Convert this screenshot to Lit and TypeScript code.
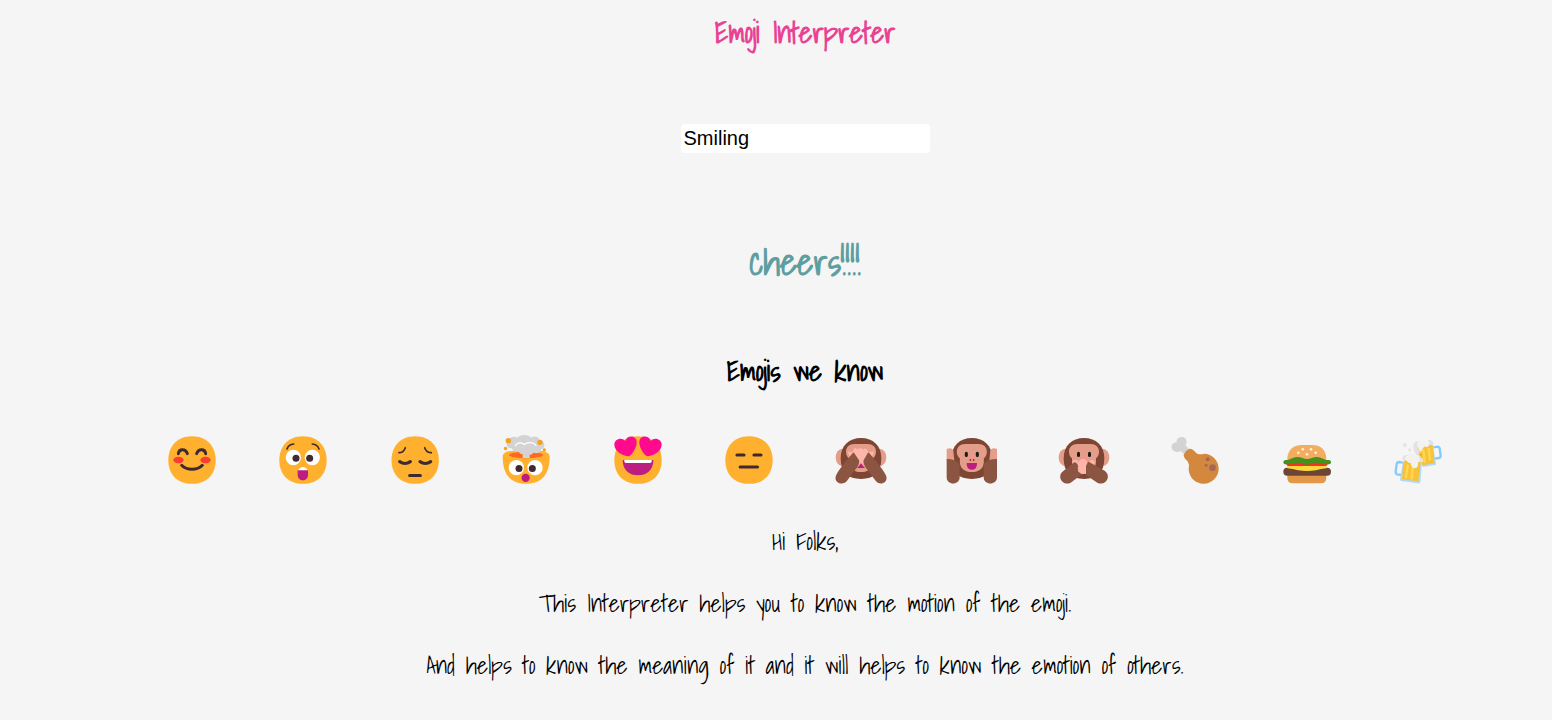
import { LitElement, html, css, svg, TemplateResult } from "lit";
import { customElement, state } from "lit/decorators.js";

interface Emoji {
  name: string;
  meaning: string;
  viewBox: string;
  art: TemplateResult;
}

const face = (cx: number) => svg`
  <path fill="#ffb02e" d="M${cx} 191.500c47.500 0 71-32 71-71s-23.500-72-71-72-71 33-71 72 23.500 71 71 71Z"/>`;

const wideEyes = (lx: number, rx: number, y: number) => svg`
  <circle cx=${lx} cy=${y} r="23" fill="#fff"/>
  <circle cx=${rx} cy=${y} r="23" fill="#fff"/>
  <circle cx=${lx + 8} cy=${y + 2.5} r="10.500" fill="#402a32"/>
  <circle cx=${rx - 8} cy=${y + 2.5} r="10.500" fill="#402a32"/>`;

const monkeyHead = (cx: number) => svg`
  <path fill="#7d4533" d="M${cx} 54c-36 0-61 23-61 61 0 43 22 62 61 62s61-19 61-62c0-38-25-61-61-61Z"/>
  <path fill="#e39d89" d="M${cx - 20} 72h40c15 0 25 9 25 23 0 10-4 16-9 20v10c0 20-15 31-36 31s-36-11-36-31v-10c-5-4-9-10-9-20 0-14 10-23 25-23Z"/>`;

const monkeyEars = (cx: number) => svg`
  <ellipse cx=${cx - 56} cy="112" rx="20" ry="26" fill="#e39d89"/>
  <ellipse cx=${cx + 56} cy="112" rx="20" ry="26" fill="#e39d89"/>`;

const monkeyEyes = (cx: number) => svg`
  <rect x=${cx - 21} y="95" width="9" height="16" rx="4.500" fill="#1c1c1c"/>
  <rect x=${cx + 12} y="95" width="9" height="16" rx="4.500" fill="#1c1c1c"/>`;

const emojis: Emoji[] = [
  {
    name: "😊", meaning: "Smiling", viewBox: "41 36 168 168",
    art: svg`${face(125)}
      <ellipse cx="84.500" cy="120" rx="15.500" ry="10" fill="#ff3a30"/>
      <ellipse cx="165.500" cy="120" rx="15.500" ry="10" fill="#ff3a30"/>
      <g fill="none" stroke="#402a32" stroke-width="9" stroke-linecap="round">
        <path d="M84 101c2-16 22-16 27 0M139 101c5-16 25-16 27 0M94 136c15 16 47 16 62 0"/>
      </g>`,
  },
  {
    name: "😲", meaning: "Astonished", viewBox: "376 36 168 168",
    art: svg`${face(460)}${wideEyes(431, 488, 112.5)}
      <g fill="none" stroke="#402a32" stroke-width="5" stroke-linecap="round">
        <path d="M412 87q5-14 20-15M508 87q-5-14-20-15"/>
      </g>
      <path fill="#bb1d80" d="M444 150h31v15c0 21-31 21-31 0Z"/>
      <path fill="#fff" d="M444 151q16-20 31 0Z"/>`,
  },
  {
    name: "😔", meaning: "Sad", viewBox: "50 36 168 168",
    art: svg`${face(134.500)}
      <g fill="none" stroke="#402a32" stroke-linecap="round">
        <path stroke-width="5" d="M105 83q-5 15-19 15M163 83q5 15 20 15"/>
        <path stroke-width="9.500" d="M88 125q16 11 32 0M149 125q16 11 32 0M118 166.500h32"/>
      </g>`,
  },
  {
    name: "🤯", meaning: "Mind blown", viewBox: "385 36 168 168",
    art: svg`
      <path fill="#ffb02e" d="M399 110c0-10 12-17 28-17h84c17 0 29 7 29 17 0 51-23 81-71 81s-70-30-70-81Z"/>
      <ellipse cx="469" cy="105" rx="51" ry="10" fill="#ff6723"/>
      <path fill="#d3d3d3" d="M459 114V103c-6-1-10-3-12-8-13 2-20-4-20-10-19 2-21-22-7-25 0-10 15-12 23-7 8-11 34-11 41 0 10-7 25-3 26 8 16 1 20 24 4 27 1 9-11 14-23 10-2 4-6 6-11 6v10Z"/>
      <path fill="none" stroke="#fff" stroke-width="3.500" stroke-linecap="round" d="M437 77c4-10 20-11 27-3 7-8 29-9 35 3"/>
      <circle cx="416" cy="62" r="8" fill="#f4a020"/><circle cx="511" cy="67" r="8" fill="#f4a020"/>
      <circle cx="407.500" cy="85.500" r="5" fill="#f4a020"/><circle cx="524" cy="90" r="5" fill="#f4a020"/>
      ${wideEyes(440, 496, 143)}
      <circle cx="468" cy="173.500" r="12.500" fill="#bb1d80"/>`,
  },
  {
    name: "😍", meaning: "Love", viewBox: "44 36 168 168",
    art: svg`${face(128)}
      <path fill="#bb1d80" d="M82 120h92c0 27-16 46-46 46s-46-19-46-46Z"/>
      <path fill="#fff" d="M87 120h82q1 9-5 9H92q-6 0-5-9Z"/>
      <path fill="#ff0a8f" d="M101 109C82 107 58 95 57 74c0-16 21-24 33-11 5-18 32-18 34 2 1 17-11 35-23 44Z"/>
      <path fill="#ff0a8f" d="M155 109c19-2 43-14 44-35 0-16-21-24-33-11-5-18-32-18-34 2-1 17 11 35 23 44Z"/>`,
  },
  {
    name: "😑", meaning: "Expressionless", viewBox: "379 36 168 168",
    art: svg`${face(463)}
      <path fill="none" stroke="#402a32" stroke-width="9.500" stroke-linecap="round" d="M427 105h21M478 105h21M436.500 141h52"/>`,
  },
  {
    name: "🙈", meaning: "See no evil", viewBox: "38 36 168 168",
    art: svg`${monkeyEars(122)}${monkeyHead(122)}
      <path fill="#ffb6aa" d="M82 96c5-4 10 2 14 1l5-11c3-4 8-2 10 3 3-6 14-6 18 0 3-5 9-5 11 0l5 8c5 1 10-5 16-1l-5 13-25 19-4 6h-10l-4-6-25-19Z"/>
      <path fill="#bb1d80" d="M122 129q4 8 12 15h-24q8-7 12-15Z"/>
      <path fill="#8b5542" d="M98 98q3-1 5 3l13 20q2 5-1 11l-4 9-32 43c-15 16-42 1-31-20 10-19 34-47 50-66ZM146 98q-3-1-5 3l-11 20q-2 5 1 11l4 9 32 43c15 16 40 1 29-20-10-19-34-47-50-66Z"/>`,
  },
  {
    name: "🙉", meaning: "Hear no evil", viewBox: "373 36 168 168",
    art: svg`${monkeyHead(456.500)}${monkeyEyes(456.500)}
      <path fill="#ff8e8a" d="M446 115q10-4 21 0v8q-10 5-21 0Z"/>
      <circle cx="452" cy="120" r="2.500" fill="#321b22"/><circle cx="462" cy="120" r="2.500" fill="#321b22"/>
      <path fill="#bb1d80" d="M441 129h31c0 13-5 20-15.500 20S441 142 441 129Z"/>
      <path fill="#e39d89" d="M381 122V87q15-6 20 5l3 30ZM532 122V87q-15-6-20 5l-3 30Z"/>
      <path fill="#8b5542" d="M381 117q28 0 39 15v40c0 25-39 25-39 0ZM532 117q-29 0-40 15v40c0 25 40 25 40 0Z"/>`,
  },
  {
    name: "🙊", meaning: "Speak no evil", viewBox: "47 36 168 168",
    art: svg`${monkeyEars(131)}${monkeyHead(131)}${monkeyEyes(131)}
      <path fill="#ff8e8a" d="M117 123q3-10 14-10t14 10Z"/>
      <circle cx="105" cy="127" r="8" fill="#ffb6aa"/><circle cx="155" cy="128" r="8" fill="#ffb6aa"/>
      <path fill="#ffb6aa" d="M112 132c2-10 10-17 18-15 7 0 9 6 12 13v31l-28 2Z"/>
      <path fill="#8b5542" d="M102 127c6-2 10 6 12 14l-3 3 3 5-3 4 14 10-34 25c-23 12-44-19-22-35ZM145 125c-5 3-5 8-8 13v27l35 24c24 9 43-20 21-37Z"/>`,
  },
  {
    name: "🍗", meaning: "Poultry leg", viewBox: "382 36 168 168",
    art: svg`
      <path fill="#d3d3d3" d="M411 68c-3-20 28-24 30-4 0 5-2 9-4 12l11 11-15 15-10-9c-13 9-30-3-27-16 2-7 9-10 15-9Z"/>
      <path fill="#d3883e" d="M432 105q5-14 18-19c9-1 14 8 23 15q9 3 20 0c25 0 44 21 44 45s-20 45-45 45-45-20-45-45q3-13-3-22c-8-7-12-13-12-19Z"/>
      <circle cx="504" cy="118" r="6" fill="#a56953"/><circle cx="499.500" cy="136" r="4.500" fill="#a56953"/><circle cx="518.500" cy="143" r="10" fill="#a56953"/>`,
  },
  {
    name: "🍔", meaning: "Burger", viewBox: "56 36 168 168",
    art: svg`
      <path fill="#e39847" d="M81 155h117v18q0 17-17 17H98q-17 0-17-17Z"/>
      <rect x="69" y="143" width="143" height="24" rx="12" fill="#6d4534"/>
      <path fill="#ffd83b" d="M81 138h117v7q-18 2-31 6-27 4-54 0-15-4-32-6Z"/>
      <rect x="78" y="123" width="124" height="15" rx="6" fill="#f92f28"/>
      <path fill="#f3ad61" d="M81 120v-7q5-38 45-38h28q40 0 44 38v7Z"/>
      <path fill="#44911b" d="M76 120c14 1 19-9 35-9 12 0 19 6 29 6 11 0 18-6 29-6 16 0 20 10 36 9 10 1 9 13 0 13-19 1-29-5-38-5-10 0-17 6-27 6s-17-6-27-6c-11 0-18 6-37 5-9 0-9-13 0-13Z"/>
      <g fill="#fff0d3"><circle cx="127.500" cy="88" r="4"/><circle cx="152" cy="88" r="4"/><circle cx="114" cy="98.500" r="4"/><circle cx="166" cy="98.500" r="4"/><circle cx="140" cy="103" r="4"/></g>`,
  },
  {
    name: "🍻", meaning: "cheers!!!!", viewBox: "391 36 168 168",
    art: svg`
      <path fill="none" stroke="#83cbff" stroke-width="7" d="M521 82l14-2q4 0 5 5l3 22q0 6-5 7l-13 2"/>
      <path fill="#aed9fb" d="M465 82l55-9 9 61-39 7-18-28Z"/>
      <path fill="#f9c23c" d="M465 85l54-12 6 57-37 6-6-24q-13-10-17-27Z"/>
      <path fill="none" stroke="#ffd84b" stroke-width="7" stroke-linecap="round" d="M491 91l4 34M507 84l4 35"/>
      <path fill="#f2f2f3" d="M474 68q10-11 26-4l8 14q-7 5-12 1-8 4-12 17-10-6-10-28Z"/>
      <path fill="#e2e2e4" d="M463 90c-6-14 0-26 12-27-4 10-2 22 5 34l-4 8q-11-1-13-15ZM503 60c9-3 18 1 19 13l-2 3-11-2q0-8-6-14Z"/>
      <path fill="none" stroke="#83cbff" stroke-width="7" d="M430 128l-12-2q-6 0-7 6l-3 23q0 7 5 8l14 2"/>
      <path fill="#aed9fb" d="M431 118l56 6-5 62q-1 5-6 4l-51-7q-5-1-4-5Z"/>
      <path fill="#f9c23c" d="M432 118l52 4-8 62-49-6Z"/>
      <path fill="none" stroke="#ffd84b" stroke-width="7" stroke-linecap="round" d="M444 136l-5 36M459 142l-3 33"/>
      <path fill="#f2f2f3" d="M429 126c-4-14 4-21 13-20 6-8 15-6 20-1 12-4 21 3 20 8 9 2 10 11 4 14l-10-2c-1 13-3 19-11 19-9 0-10-7-12-15-7 1-12-6-14-9Z"/>
      <path fill="#e2e2e4" d="M429 121c-3-10 6-18 16-15-7 3-9 8-10 15ZM477 108c5 0 6 3 5 5 9 2 10 11 4 14l-7-2q2-9-2-17Z"/>
      <g fill="#f1aa29"><circle cx="484" cy="105" r="3"/><circle cx="508" cy="82" r="2"/><circle cx="514" cy="124" r="2"/><circle cx="477" cy="151" r="2"/><circle cx="432" cy="157" r="2"/></g>
      <g fill="#e4e4e6"><circle cx="435" cy="75" r="6"/><circle cx="450" cy="90" r="5"/></g>`,
  },
];

@customElement("app-root")
export class AppRoot extends LitElement {
  @state() private text = "Smiling";
  @state() private meaning = "cheers!!!!";

  static styles = css`
    :host {
      display: block;
      box-sizing: border-box;
      min-height: 100vh;
      padding: 9px 0 36px 58px;
      background: #f5f5f5;
      color: #000;
      font-family: "Shadows Into Light", "Liberation Sans Narrow", "Liberation Sans", sans-serif;
      font-size: 24px;
      line-height: 38px;
      text-align: center;
    }
    h1, h2, p, output { margin: 0; }
    h1, h2 {
      font-size: 28px;
      line-height: 48px;
      font-weight: 700;
    }
    h1 {
      color: #e84393;
      font-size: 29px;
    }
    .entry {
      display: block;
      box-sizing: border-box;
      width: 249px;
      height: 29px;
      margin: 67px auto 0;
      padding: 1px 3px;
      border: 0;
      border-radius: 4px;
      background: #fff;
      color: #000;
      font: 20px "Liberation Sans", Arial, sans-serif;
    }
    .meaning {
      display: block;
      margin: 77px 0 53px;
      color: #5f9ea0;
      font-size: 36px;
      line-height: 64px;
      font-weight: 700;
    }
    .emojis {
      display: flex;
      margin: 37px 78px 34px;
      padding: 0;
      list-style: none;
    }
    .emojis li {
      display: flex;
      flex: 1;
      justify-content: center;
    }
    .emoji {
      display: block;
      padding: 0;
      border: 0;
      background: none;
      cursor: pointer;
    }
    .emoji svg {
      display: block;
      width: 56px;
      height: 56px;
    }
    .notes {
      display: grid;
      gap: 24px;
    }
  `;

  render() {
    return html`
      <main>
        <h1>Emoji Interpreter</h1>
        <input
          class="entry"
          aria-label="Emoji"
          .value=${this.text}
          @input=${(e: Event) => { this.text = (e.target as HTMLInputElement).value; }}
        />
        <output class="meaning">${this.meaning}</output>
        <h2>Emojis we know</h2>
        <ul class="emojis">
          ${emojis.map((item) => html`
            <li>
              <button class="emoji" aria-label=${item.name} @click=${() => { this.meaning = item.meaning; }}>
                <svg viewBox=${item.viewBox} aria-hidden="true">${item.art}</svg>
              </button>
            </li>
          `)}
        </ul>
        <section class="notes">
          <p>Hi Folks,</p>
          <p>This Interpreter helps you to know the motion of the emoji.</p>
          <p>And helps to know the meaning of it and it will helps to know the emotion of others.</p>
        </section>
      </main>
    `;
  }
}
